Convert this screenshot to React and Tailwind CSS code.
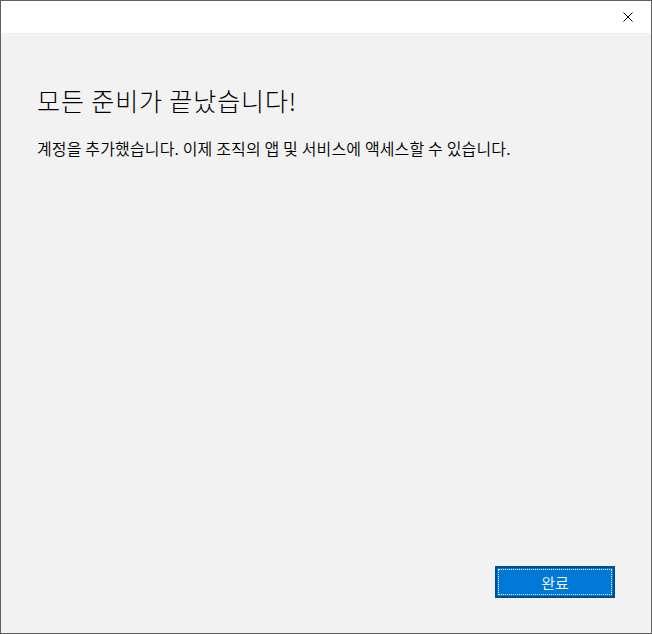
import React from 'react';

export default function App() {
  const font = { fontFamily: '"Noto Sans CJK KR", "Noto Sans", sans-serif' };

  return (
    <div className="w-[652px] h-[634px] border border-[#5f5f5f] flex flex-col bg-[#f2f2f2]" style={font}>
      {/* Title bar */}
      <div className="h-[32px] bg-white flex justify-end items-center shrink-0">
        <button className="w-[46px] h-[32px] flex items-center justify-center">
          <svg width="10" height="10" viewBox="0 0 10 10" className="text-black">
            <path d="M0.5 0.5 L9.5 9.5 M9.5 0.5 L0.5 9.5" stroke="currentColor" strokeWidth="1" fill="none" />
          </svg>
        </button>
      </div>

      {/* Body */}
      <div className="flex-1 flex flex-col px-[36px] pt-[51px] pb-[35px]">
        <h1 className="text-[25px] leading-[32px] tracking-[0.9px] text-black font-light">모든 준비가 끝났습니다!</h1>
        <p className="mt-[21px] text-[16px] leading-[22px] tracking-[0.15px] text-black font-[350]">
          계정을 추가했습니다. 이제 조직의 앱 및 서비스에 액세스할 수 있습니다.
        </p>

        <div className="mt-auto flex justify-end">
          <button className="w-[120px] h-[32px] bg-[#0078d7] border-2 border-[#004e8c] text-white text-[15px] leading-none font-[350] outline-1 outline-dotted outline-white outline-offset-[-4px]">
            완료
          </button>
        </div>
      </div>
    </div>
  );
}
